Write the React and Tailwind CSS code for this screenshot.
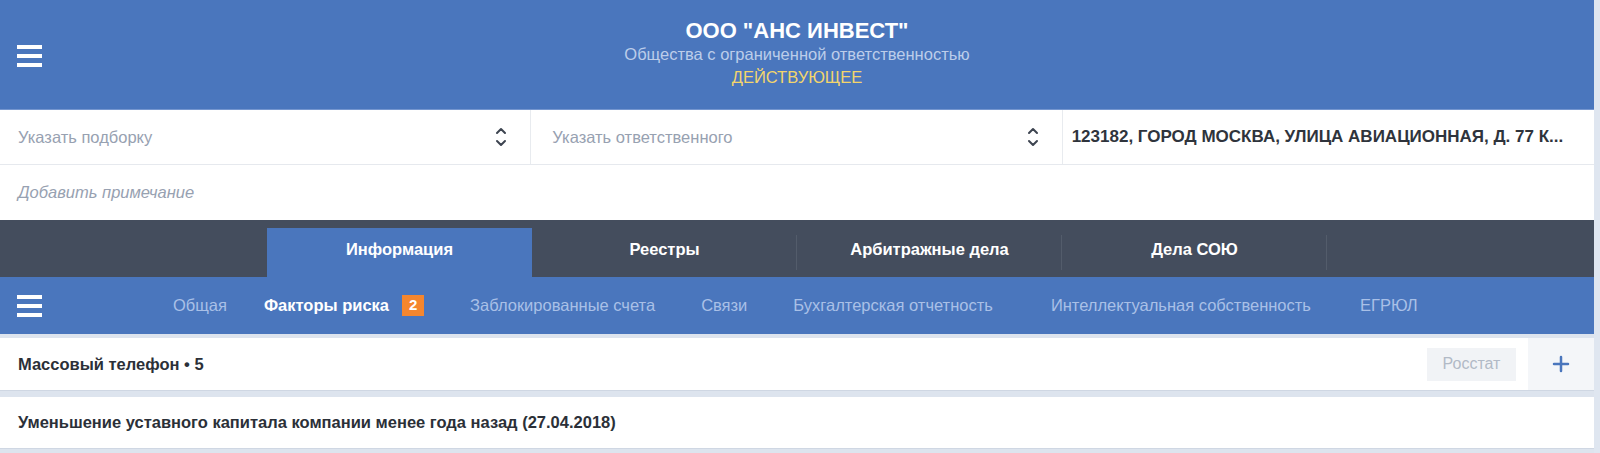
import { ChevronUp, ChevronDown, Plus } from 'lucide-react';

const tabs = ['Информация', 'Реестры', 'Арбитражные дела', 'Дела СОЮ'];

const subItems = [
  { label: 'Общая', gap: 'ml-0' },
  { label: 'Факторы риска', active: true, badge: 2, gap: 'ml-[37px]' },
  { label: 'Заблокированные счета', gap: 'ml-[46px]' },
  { label: 'Связи', gap: 'ml-[46px]' },
  { label: 'Бухгалтерская отчетность', gap: 'ml-[46px]' },
  { label: 'Интеллектуальная собственность', gap: 'ml-[58px]' },
  { label: 'ЕГРЮЛ', gap: 'ml-[49px]' },
];

function Burger() {
  return (
    <div className="flex flex-col gap-[5px] w-[25px]">
      <span className="block h-[4px] bg-white" />
      <span className="block h-[4px] bg-white" />
      <span className="block h-[4px] bg-white" />
    </div>
  );
}

function UpDown() {
  return (
    <div className="flex flex-col items-center text-[#3d4450] -space-y-[4px]">
      <ChevronUp size={16} strokeWidth={3} />
      <ChevronDown size={16} strokeWidth={3} />
    </div>
  );
}

export default function App() {
  return (
    <div
      className="flex w-[1600px] h-[453px] overflow-hidden bg-[#dfe6f0]"
      style={{ fontFamily: '"Liberation Sans", Arial, sans-serif' }}
    >
      <div className="w-[1594px] flex flex-col">
        {/* Company header */}
        <header className="h-[110px] bg-[#4a76bd] border-b border-[#7596cf] grid grid-cols-[1fr_auto_1fr] items-center">
          <div className="pl-[17px] pt-[2px]">
            <Burger />
          </div>
          <div className="flex flex-col items-center pb-[3px]">
            <h1 className="text-[22px] leading-[25px] font-bold text-white">ООО "АНС ИНВЕСТ"</h1>
            <p className="text-[16.5px] leading-[23px] text-[#bccdea]">Общества с ограниченной ответственностью</p>
            <p className="text-[16.5px] leading-[23px] text-[#f3d56c]">ДЕЙСТВУЮЩЕЕ</p>
          </div>
          <div />
        </header>

        {/* Selects */}
        <div className="h-[55px] bg-white grid grid-cols-3 border-b border-[#e6e9ee]">
          <div className="flex items-center justify-between pl-[18px] pr-[21px] border-r border-[#e8ebef]">
            <span className="text-[16.5px] text-[#97a1b1]">Указать подборку</span>
            <UpDown />
          </div>
          <div className="flex items-center justify-between pl-[21px] pr-[21px] border-r border-[#e8ebef]">
            <span className="text-[16.5px] text-[#97a1b1]">Указать ответственного</span>
            <UpDown />
          </div>
          <div className="flex items-center pl-[9px] pr-[20px] overflow-hidden">
            <span className="text-[17px] font-bold text-[#2f343c] whitespace-nowrap">
              123182, ГОРОД МОСКВА, УЛИЦА АВИАЦИОННАЯ, Д. 77 К...
            </span>
          </div>
        </div>

        {/* Note */}
        <div className="h-[55px] bg-white flex items-center pl-[18px]">
          <span className="text-[16.5px] italic text-[#97a1b1]">Добавить примечание</span>
        </div>

        {/* Main tabs */}
        <nav className="h-[57px] bg-[#444d5d] flex justify-center items-end">
          {tabs.map((t, i) => (
            <div
              key={t}
              className={
                i === 0
                  ? 'w-[265px] h-[49px] bg-[#4a76bd] flex items-center justify-center pb-[6px]'
                  : 'w-[265px] h-[49px] flex items-center justify-center pb-[6px] relative'
              }
            >
              <span className="text-[16.5px] font-bold text-white">{t}</span>
              {i > 0 && <span className="absolute right-0 top-[7px] bottom-[7px] w-px bg-[#535c6b]" />}
            </div>
          ))}
        </nav>

        {/* Sub tabs */}
        <div className="h-[57px] bg-[#4a76bd] flex items-center">
          <div className="pl-[17px] pr-[131px]">
            <Burger />
          </div>
          <div className="flex items-center">
            {subItems.map(s => (
              <div key={s.label} className={`flex items-center gap-[13px] ${s.gap}`}>
                <span
                  className={
                    s.active
                      ? 'text-[16.5px] font-bold text-white'
                      : 'text-[16.5px] text-[#a9c0e7]'
                  }
                >
                  {s.label}
                </span>
                {s.badge && (
                  <span className="w-[22px] h-[21px] bg-[#f5862e] text-white text-[15px] font-bold flex items-center justify-center">
                    {s.badge}
                  </span>
                )}
              </div>
            ))}
          </div>
        </div>

        {/* Risk factors list */}
        <div className="flex-1 bg-[#dde4ee] pt-[4px] flex flex-col gap-[6px]">
          <div className="h-[53px] bg-white flex items-center border-b border-[#cfd7e3]">
            <span className="pl-[18px] flex-1 text-[16.5px] font-bold text-[#2b3038]">Массовый телефон • 5</span>
            <span className="w-[89px] h-[33px] bg-[#f1f3f6] flex items-center justify-center text-[16px] text-[#b2bac6]">
              Росстат
            </span>
            <div className="ml-[12px] w-[66px] self-stretch bg-[#f4f6f9] flex items-center justify-center text-[#4a76bd]">
              <Plus size={24} strokeWidth={2.5} />
            </div>
          </div>
          <div className="h-[52px] bg-white flex items-center border-b border-[#cfd7e3]">
            <span className="pl-[18px] text-[16.5px] font-bold text-[#2b3038]">
              Уменьшение уставного капитала компании менее года назад (27.04.2018)
            </span>
          </div>
        </div>
      </div>
    </div>
  );
}
